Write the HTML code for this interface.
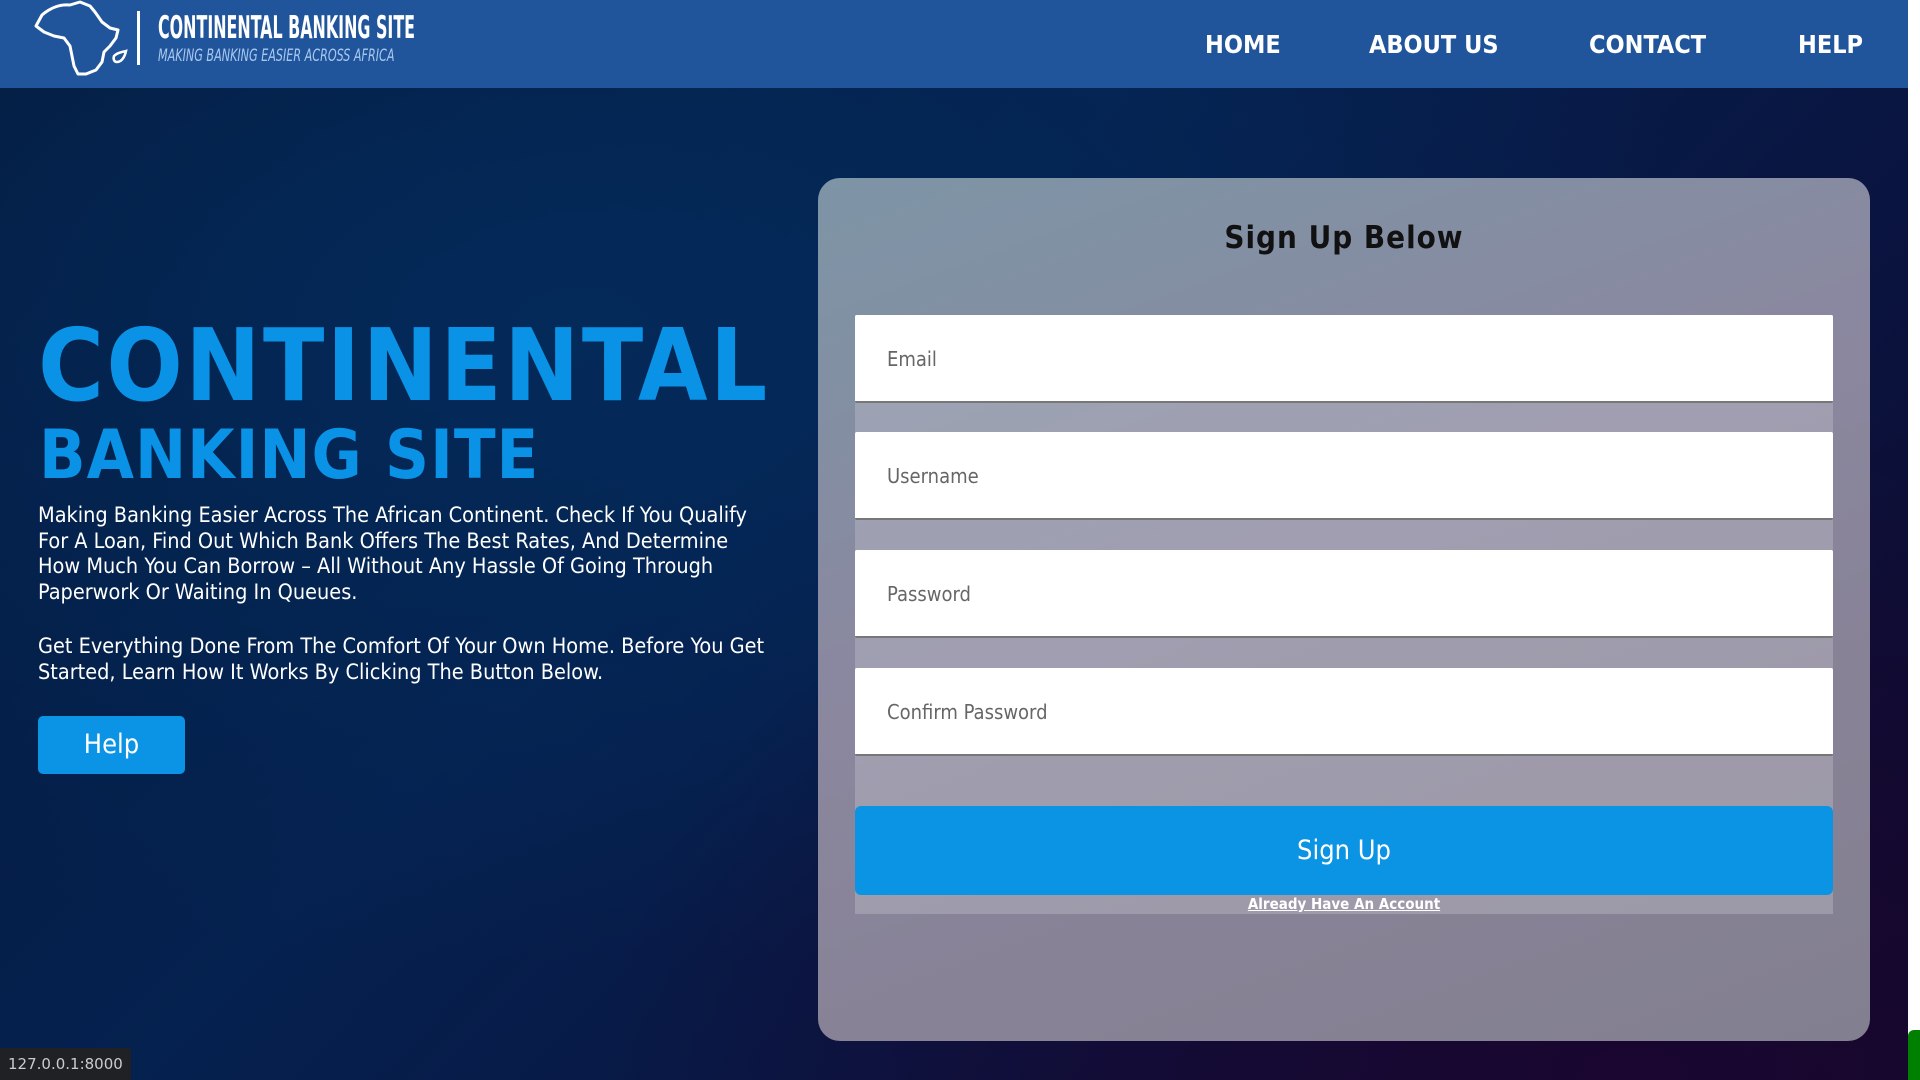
<!DOCTYPE html>
<html><head><meta charset="utf-8"><style>
*{margin:0;padding:0;box-sizing:border-box}
html,body{width:1920px;height:1080px;overflow:hidden}
body{font-family:"DejaVu Sans Condensed","DejaVu Sans","Liberation Sans",sans-serif;background:radial-gradient(ellipse at 85% 100%,#1a0630 0%,transparent 45%),radial-gradient(ellipse at 30% 30%,#042a5a 0%,transparent 60%),linear-gradient(135deg,#031838 0%,#05214f 40%,#0a1440 70%,#0e0828 100%);position:relative}
.hdr{position:absolute;left:0;top:0;width:1908px;height:88px;background:#21559b}
.logo{position:absolute;left:30px;top:0}
.lt{position:absolute;left:158px;top:10px;color:#fff;font-family:"Liberation Sans Narrow","DejaVu Sans Condensed",sans-serif;font-weight:bold;font-size:31px;white-space:nowrap;transform:scaleX(.57);transform-origin:left}
.ls{position:absolute;left:158px;top:46px;color:#a9c8f0;font-family:"Liberation Sans Narrow","DejaVu Sans Condensed",sans-serif;font-style:italic;font-size:17px;white-space:nowrap;transform:scaleX(.73);transform-origin:left}
.bar{position:absolute;left:137px;top:11px;width:3px;height:54px;background:#fff}
.nav a{position:absolute;top:30px;color:#fff;font-weight:bold;font-size:25px;text-decoration:none;white-space:nowrap}
.h1{position:absolute;left:38px;top:316px;color:#0a93e6;font-weight:bold;font-size:100px;letter-spacing:2.4px;line-height:1;white-space:nowrap}
.h2{position:absolute;left:39px;top:422px;color:#0a93e6;font-weight:bold;font-size:68px;letter-spacing:1px;line-height:1;white-space:nowrap}
.p{position:absolute;left:38px;color:#fff;font-size:21.5px;line-height:25.7px;width:772px}
.help{position:absolute;left:38px;top:716px;width:147px;height:58px;background:#0b93e5;border-radius:5px;color:#fff;font-size:27px;text-align:center;line-height:58px}
.card{position:absolute;left:818px;top:178px;width:1052px;height:863px;border-radius:22px;background:linear-gradient(160deg,#7d95a6 0%,#8a88a0 40%,#888296 70%,#828090 100%);overflow:hidden}
.band{position:absolute;left:37px;top:137px;width:978px;height:599px;background:rgba(200,200,210,.35)}
.title{position:absolute;left:0;width:100%;top:42px;text-align:center;font-family:"DejaVu Sans Condensed",sans-serif;font-weight:bold;font-size:31px;color:#111;letter-spacing:1px}
.in{position:absolute;left:37px;width:978px;height:88px;background:#fff;border-bottom:2px solid #777;border-radius:2px;color:#666;font-size:20px;line-height:88px;padding-left:32px}
.btn{position:absolute;left:37px;top:628px;width:978px;height:89px;background:#0b94e4;border-radius:6px;color:#fff;font-size:27px;text-align:center;line-height:89px}
.al{position:absolute;left:0;width:100%;top:717px;text-align:center;color:#fff;font-weight:bold;font-size:15px;text-decoration:underline}
.st{position:absolute;left:0;top:1048px;width:131px;height:32px;background:#1f2124;color:#ccc;font-family:"DejaVu Sans",sans-serif;font-size:15px;line-height:32px;padding-left:8px}
.sb{position:absolute;left:1908px;top:0;width:12px;height:1080px;background:#fff}
.sg{position:absolute;left:1908px;top:1030px;width:12px;height:50px;background:#008000;border-radius:6px 0 0 0}
</style></head><body>
<div class="hdr">
<svg class="logo" width="100" height="80" viewBox="0 0 100 80"><path d="M12 15 C20 8 30 4 40 5 L50 2 L60 6 L65 12 L72 22 L80 28 L88 30 L86 38 L80 46 L74 52 L72 62 L66 70 L56 74 L48 74 L44 66 L42 56 L40 46 L34 38 L24 36 L14 32 L6 26 Z" fill="none" stroke="#fff" stroke-width="3" stroke-linejoin="round"/><path d="M84 56 C88 52 93 52 96 51 C95 56 92 62 87 62 C84 62 83 59 84 56 Z" fill="none" stroke="#fff" stroke-width="2.5"/></svg>
<div class="bar"></div>
<div class="lt">CONTINENTAL BANKING SITE</div>
<div class="ls">MAKING BANKING EASIER ACROSS AFRICA</div>
<div class="nav"><a style="left:1205px">HOME</a><a style="left:1369px">ABOUT US</a><a style="left:1589px">CONTACT</a><a style="left:1798px">HELP</a></div>
</div>
<div class="h1">CONTINENTAL</div>
<div class="h2">BANKING SITE</div>
<div class="p" style="top:503px">Making Banking Easier Across The African Continent. Check If You Qualify<br>For A Loan, Find Out Which Bank Offers The Best Rates, And Determine<br>How Much You Can Borrow – All Without Any Hassle Of Going Through<br>Paperwork Or Waiting In Queues.</div>
<div class="p" style="top:634px;width:820px">Get Everything Done From The Comfort Of Your Own Home. Before You Get<br>Started, Learn How It Works By Clicking The Button Below.</div>
<div class="help">Help</div>
<div class="card">
<div class="band"></div>
<div class="title">Sign Up Below</div>
<div class="in" style="top:137px">Email</div>
<div class="in" style="top:254px">Username</div>
<div class="in" style="top:372px">Password</div>
<div class="in" style="top:490px">Confirm Password</div>
<div class="btn">Sign Up</div>
<div class="al">Already Have An Account</div>
</div>
<div class="st">127.0.0.1:8000</div>
<div class="sb"></div><div class="sg"></div>
</body></html>
